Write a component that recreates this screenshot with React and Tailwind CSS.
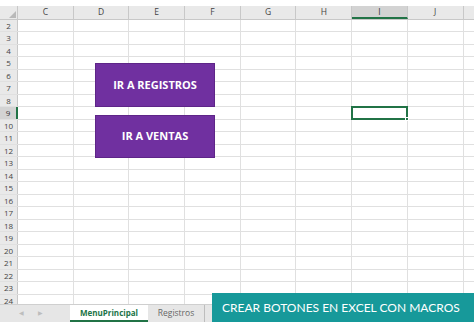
import React from 'react';

const cols = ['C', 'D', 'E', 'F', 'G', 'H', 'I', 'J'];
const rows = Array.from({ length: 23 }, (_, i) => i + 2);

function HeaderRow() {
  return (
    <div className="flex h-[13.5px] bg-[#e9e9e9] border-b border-[#c8c8c8]">
      <div className="relative w-[18px] shrink-0 border-r border-[#c8c8c8]">
        <svg className="absolute bottom-[1px] right-[1px]" width="7" height="7" viewBox="0 0 7 7">
          <polygon points="7,0 7,7 0,7" fill="#b9b9b9" />
        </svg>
      </div>
      {cols.map((c) => (
        <div
          key={c}
          className={
            c === 'I'
              ? 'w-[55.7px] shrink-0 border-r border-[#c8c8c8] bg-[#d3d3d3] border-b-2 border-b-[#217346] text-center text-[8.5px] leading-[12px] text-[#333]'
              : 'w-[55.7px] shrink-0 border-r border-[#c8c8c8] text-center text-[8.5px] leading-[12px] text-[#444]'
          }
        >
          {c}
        </div>
      ))}
      <div className="flex-1" />
    </div>
  );
}

function Row({ n }) {
  return (
    <div className="flex h-[12.5px] border-b border-[#e0e0e0]">
      <div
        className={
          n === 9
            ? 'w-[18px] shrink-0 bg-[#d3d3d3] border-r-2 border-[#217346] text-center text-[8px] leading-[12px] text-[#333]'
            : 'w-[18px] shrink-0 bg-[#e9e9e9] border-r border-[#c8c8c8] text-center text-[8px] leading-[12px] text-[#444]'
        }
      >
        {n}
      </div>
      {cols.map((c) => (
        <div key={c} className="w-[55.7px] shrink-0 border-r border-[#e0e0e0] bg-white" />
      ))}
      <div className="flex-1 bg-white" />
    </div>
  );
}

export default function App() {
  return (
    <div
      className="relative h-[322px] w-[474px] overflow-hidden bg-white"
      style={{ fontFamily: '"Open Sans", "Liberation Sans", sans-serif' }}
    >
      <div className="h-[6px] bg-white" />
      <HeaderRow />
      <div className="h-[284.5px] overflow-hidden">
        {rows.map((n) => (
          <Row key={n} n={n} />
        ))}
      </div>

      <div className="flex h-[18px] items-stretch bg-[#e6e6e6] border-t border-[#cfcfcf]">
        <div className="flex w-[70px] items-center gap-[14px] pl-[19px] text-[6px] text-[#bdbdbd]">
          <span>◀</span>
          <span>▶</span>
        </div>
        <div className="flex w-[78px] items-center justify-center bg-white border-b-2 border-[#217346] text-[8px] font-bold text-[#217346]">
          MenuPrincipal
        </div>
        <div className="flex w-[57px] items-center justify-center border-r border-[#bdbdbd] text-[8.5px] text-[#666]">
          Registros
        </div>
      </div>

      <button className="absolute left-[95px] top-[63px] flex h-[44px] w-[120px] items-center justify-center bg-[#7030a0] border border-[#5e2588] text-[11px] font-bold text-white">
        IR A REGISTROS
      </button>
      <button className="absolute left-[95px] top-[115px] flex h-[43px] w-[120px] items-center justify-center bg-[#7030a0] border border-[#5e2588] text-[11px] font-bold text-white">
        IR A VENTAS
      </button>

      <div className="absolute left-[351px] top-[105.5px] h-[14px] w-[57px] border-2 border-[#217346]">
        <div className="absolute -bottom-[3px] -right-[3px] h-[4px] w-[4px] bg-[#217346] border border-white" />
      </div>

      <div
        className="absolute left-[212px] top-[293px] flex h-[29px] w-[262px] items-center pl-[10px] bg-[#17999a] text-[12px] text-white"
        style={{ fontFamily: 'Lato, "Open Sans", sans-serif' }}
      >
        CREAR BOTONES EN EXCEL CON MACROS
      </div>
    </div>
  );
}
